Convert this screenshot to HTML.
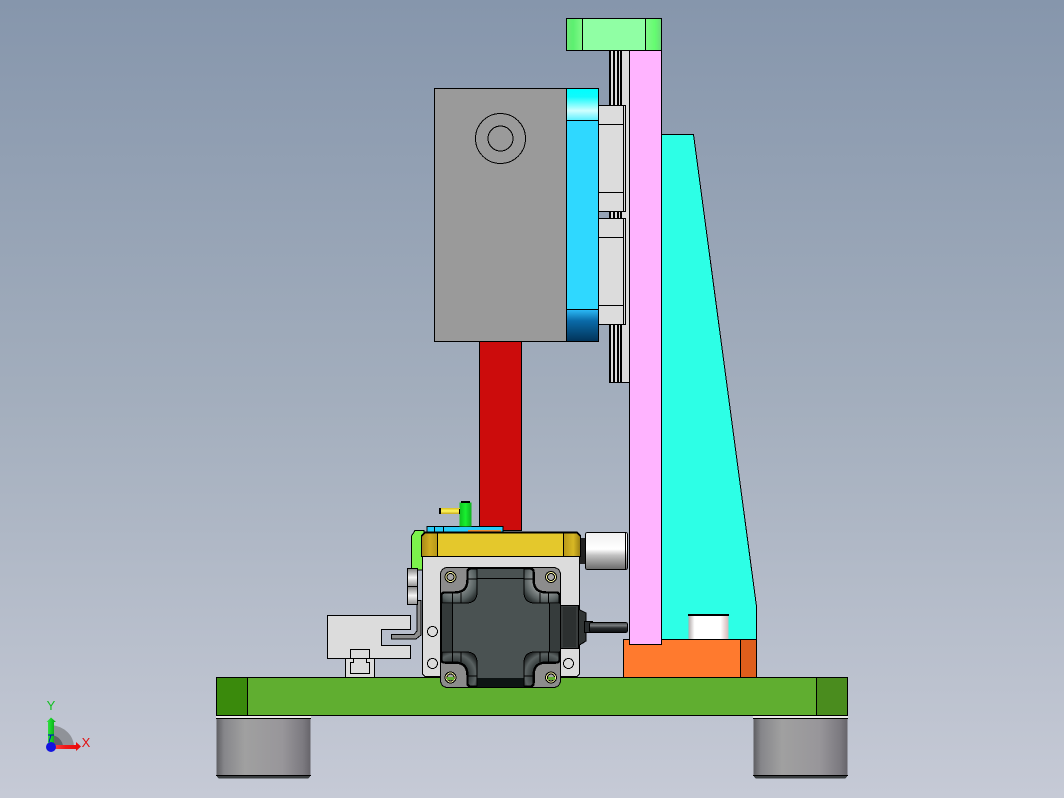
<!DOCTYPE html>
<html>
<head>
<meta charset="utf-8">
<style>
html,body{margin:0;padding:0;background:#a0aaba;}
body{width:1064px;height:798px;overflow:hidden;}
svg{display:block;}
text{font-family:"Liberation Sans",sans-serif;}
</style>
</head>
<body>
<svg width="1064" height="798" viewBox="0 0 1064 798" xmlns="http://www.w3.org/2000/svg">
<defs>
<linearGradient id="bg" x1="0" y1="0" x2="0" y2="1">
<stop offset="0" stop-color="#8696ac"/><stop offset=".5" stop-color="#a3aebd"/><stop offset="1" stop-color="#c6cad6"/>
</linearGradient>
<linearGradient id="gTopL" x1="0" y1="0" x2="1" y2="0"><stop offset="0" stop-color="#6ee878"/><stop offset=".4" stop-color="#5cf070"/><stop offset="1" stop-color="#80f888"/></linearGradient>
<linearGradient id="gTopR" x1="0" y1="0" x2="1" y2="0"><stop offset="0" stop-color="#80f888"/><stop offset=".6" stop-color="#64fc70"/><stop offset="1" stop-color="#6cdc7c"/></linearGradient>
<linearGradient id="blueTop" x1="0" y1="0" x2="0" y2="1"><stop offset="0" stop-color="#00ffff"/><stop offset=".25" stop-color="#10fafc"/><stop offset=".7" stop-color="#d0ffff"/><stop offset="1" stop-color="#60f0ff"/></linearGradient>
<linearGradient id="blueBot" x1="0" y1="0" x2="0" y2="1"><stop offset="0" stop-color="#2ab8f4"/><stop offset=".35" stop-color="#0a6aa8"/><stop offset="1" stop-color="#02345a"/></linearGradient>
<linearGradient id="foot" x1="0" y1="0" x2="1" y2="0"><stop offset="0" stop-color="#5e5e62"/><stop offset=".08" stop-color="#86868a"/><stop offset=".3" stop-color="#a0a0a0"/><stop offset=".7" stop-color="#98969a"/><stop offset=".92" stop-color="#7c7a80"/><stop offset="1" stop-color="#66646a"/></linearGradient>
<linearGradient id="cyl" x1="0" y1="0" x2="0" y2="1"><stop offset="0" stop-color="#f0f0f0"/><stop offset=".45" stop-color="#ffffff"/><stop offset=".62" stop-color="#c0c0c0"/><stop offset="1" stop-color="#6a6a6a"/></linearGradient>
<linearGradient id="cylw" x1="0" y1="0" x2="1" y2="0"><stop offset="0" stop-color="#b0a8a8"/><stop offset=".15" stop-color="#fff"/><stop offset=".8" stop-color="#fff"/><stop offset=".95" stop-color="#e0c8c8"/><stop offset="1" stop-color="#c8bcbc"/></linearGradient>
<linearGradient id="yelL" x1="0" y1="0" x2="1" y2="0"><stop offset="0" stop-color="#a88a18"/><stop offset=".5" stop-color="#d0ac20"/><stop offset="1" stop-color="#b89818"/></linearGradient>
<linearGradient id="yelR" x1="0" y1="0" x2="1" y2="0"><stop offset="0" stop-color="#b89818"/><stop offset=".6" stop-color="#d8b824"/><stop offset="1" stop-color="#9c8014"/></linearGradient>
<linearGradient id="gcyl" x1="0" y1="0" x2="0" y2="1"><stop offset="0" stop-color="#808080"/><stop offset=".5" stop-color="#f4f4f4"/><stop offset="1" stop-color="#909090"/></linearGradient>
<linearGradient id="shaft" x1="0" y1="0" x2="0" y2="1"><stop offset="0" stop-color="#3a3e40"/><stop offset=".3" stop-color="#7a7e80"/><stop offset=".55" stop-color="#2a2e30"/><stop offset="1" stop-color="#0c0e10"/></linearGradient>
<linearGradient id="tube" x1="0" y1="0" x2="1" y2="0"><stop offset="0" stop-color="#10c020"/><stop offset=".5" stop-color="#18f030"/><stop offset="1" stop-color="#10b020"/></linearGradient>
<linearGradient id="pin" x1="0" y1="0" x2="0" y2="1"><stop offset="0" stop-color="#d8c020"/><stop offset=".5" stop-color="#fff860"/><stop offset="1" stop-color="#c8a818"/></linearGradient>
<radialGradient id="bTL" gradientUnits="userSpaceOnUse" cx="455" cy="580" r="26"><stop offset=".45" stop-color="#8a9090"/><stop offset=".8" stop-color="#566060"/><stop offset="1" stop-color="#2c3232"/></radialGradient>
<radialGradient id="bTR" gradientUnits="userSpaceOnUse" cx="546" cy="580" r="26"><stop offset=".45" stop-color="#9a9f9f"/><stop offset=".8" stop-color="#5a6262"/><stop offset="1" stop-color="#2c3232"/></radialGradient>
<radialGradient id="bBL" gradientUnits="userSpaceOnUse" cx="455" cy="675" r="26"><stop offset=".45" stop-color="#2a3030"/><stop offset=".8" stop-color="#5a6262"/><stop offset="1" stop-color="#242828"/></radialGradient>
<radialGradient id="bBR" gradientUnits="userSpaceOnUse" cx="546" cy="675" r="26"><stop offset=".45" stop-color="#2a3030"/><stop offset=".8" stop-color="#5a6262"/><stop offset="1" stop-color="#242828"/></radialGradient>
<linearGradient id="redA" x1="0" y1="0" x2="1" y2="0"><stop offset="0" stop-color="#ff5050"/><stop offset=".5" stop-color="#f01818"/><stop offset="1" stop-color="#e80808"/></linearGradient>
<linearGradient id="grnA" x1="0" y1="0" x2="1" y2="0"><stop offset="0" stop-color="#40e050"/><stop offset=".5" stop-color="#14d024"/><stop offset="1" stop-color="#0c9c18"/></linearGradient>
</defs>

<rect width="1064" height="798" fill="url(#bg)"/>

<g stroke="#000" stroke-width="1" shape-rendering="crispEdges">
<!-- wedge -->
<path d="M661.5 134.5H693.5L756.5 606.5V639.5H661.5Z" fill="#2dffe6"/>
<!-- white cylinder -->
<rect x="688.5" y="615.5" width="40" height="24" fill="url(#cylw)" stroke="none"/>
<path d="M688 615H729" stroke-width="2"/>

<!-- rail -->
<rect x="609.5" y="50.5" width="20" height="332" fill="#dcdcdc"/>
<g fill="#000" stroke="none">
<rect x="609" y="51" width="2" height="331"/>
<rect x="613" y="51" width="2" height="331"/>
<rect x="617" y="51" width="2" height="331"/>
<rect x="620" y="51" width="2" height="331"/>
</g>

<!-- orange -->
<rect x="623.5" y="639.5" width="117" height="38" fill="#ff7a2e"/>
<rect x="740.5" y="639.5" width="16" height="38" fill="#de5e1c"/>
<!-- pink -->
<rect x="629.5" y="50.5" width="32" height="594" fill="#ffb4ff"/>
<!-- top green -->
<rect x="566.5" y="18.5" width="95" height="32" fill="#90ffa4"/>
<rect x="567" y="19" width="15" height="31" fill="url(#gTopL)" stroke="none"/>
<rect x="646" y="19" width="15" height="31" fill="url(#gTopR)" stroke="none"/>
<path d="M582.5 18.5V50.5M645.5 18.5V50.5" fill="none"/>

<!-- slider blocks -->
<rect x="598.5" y="105.5" width="27" height="106" fill="#dcdcdc"/>
<rect x="598.5" y="218.5" width="27" height="106" fill="#dcdcdc"/>
<path d="M598.5 124.5H624M598.5 192.5H624M623.5 105.5V211.5M598.5 237.5H624M598.5 305.5H624M623.5 218.5V324.5" fill="none"/>

<!-- grey block -->
<rect x="434.5" y="88.5" width="132" height="253" fill="#9a9a9a"/>
<circle cx="500.5" cy="138.5" r="25" fill="none"/>
<circle cx="500.5" cy="138.5" r="12.5" fill="none"/>
<!-- blue -->
<rect x="566.5" y="88.5" width="32" height="253" fill="#2fd8ff"/>
<rect x="567" y="89" width="31" height="31" fill="url(#blueTop)" stroke="none"/>
<rect x="567" y="310" width="31" height="31" fill="url(#blueBot)" stroke="none"/>
<path d="M566.5 120.5H598.5M566.5 309.5H598.5" fill="none"/>

<!-- red -->
<rect x="479.5" y="341.5" width="42" height="189" fill="#cc0c0c"/>

<!-- base -->
<rect x="216.5" y="677.5" width="631" height="38" fill="#60ae30"/>
<rect x="216.5" y="677.5" width="31" height="38" fill="#3a8a0c"/>
<rect x="816.5" y="677.5" width="31" height="38" fill="#4a8c1e"/>

<!-- feet -->
<rect x="216" y="716" width="95" height="3" fill="#ecebea" stroke="none"/>
<rect x="753" y="716" width="95" height="3" fill="#ecebea" stroke="none"/>
<rect x="216.5" y="718.5" width="94" height="57" fill="url(#foot)" stroke="none"/>
<rect x="753.5" y="718.5" width="94" height="57" fill="url(#foot)" stroke="none"/>
<path d="M216 718.5H311M753 718.5H848M216 775.5H311M753 775.5H848" fill="none"/>
<path d="M217 776H310V777L308 778.500H219L217 777Z" fill="#3a3e40" stroke="none"/>
<path d="M754 776H847V777L845 778.500H756L754 777Z" fill="#3a3e40" stroke="none"/>

<!-- left white block -->
<path d="M345.500 658.500V677.500H374.500V658.500Z" fill="#dcdcdc"/>
<path d="M327.500 615.500H410.500V629.500H381.500V645.500H410.500V658.500H327.500Z" fill="#dcdcdc"/>
<path d="M350.500 658.500V649.500H369.500V658.500M353.500 658.500V662.500H350.500V673.500H369.500V662.500H366.500V658.500" fill="none"/>
<!-- L strip -->
<path d="M417 600.500V631L414 634.500H391.500V639H416L421 635V600.500Z" fill="#8e8e8e"/>

<!-- green left part -->
<path d="M411.500 570V536L415 530.500H424V570Z" fill="#7cf24c"/>
<!-- grey cylinders -->
<rect x="407.500" y="568.500" width="10" height="18" fill="url(#gcyl)"/>
<rect x="407.500" y="586.500" width="10" height="18" fill="url(#gcyl)"/>

<!-- blue strip -->
<rect x="427" y="526.500" width="76" height="6" fill="#28ccf8"/>
<path d="M434.500 526.500V532.500M443.500 526.500V532.500" fill="none"/>
<rect x="468" y="530" width="33" height="2" fill="#e88a30" stroke="none"/>
<!-- tube and pin -->
<rect x="459.500" y="502.500" width="12" height="24" fill="url(#tube)" stroke="none"/>
<rect x="461" y="501" width="9" height="2" fill="#000" stroke="none"/>
<rect x="440" y="508" width="20" height="6" fill="url(#pin)" stroke="none"/>
<rect x="439" y="508" width="2" height="6" fill="#000" stroke="none"/>
<rect x="459" y="509" width="1" height="5" fill="#000" stroke="none"/>

<!-- right cylinder -->
<rect x="579" y="538" width="7" height="26" fill="#222" stroke="none"/>
<rect x="585.500" y="532.500" width="42" height="37" rx="2" fill="url(#cyl)"/>
<path d="M625.500 533V569" fill="none"/>

<!-- plate -->
<path d="M422.500 556.500H579.500V674L577 676.500H425L422.500 674Z" fill="#dcdcdc"/>
<!-- yellow -->
<path d="M421.500 556.500V536L425 532.500H577L580.500 536V556.500Z" fill="#e4c82c"/>
<path d="M422 556V536L425 533H437.500V556Z" fill="url(#yelL)" stroke="none"/>
<path d="M563.500 533H577L580 536V556H563.500Z" fill="url(#yelR)" stroke="none"/>
<path d="M437.500 532.500V556.500M563.500 532.500V556.500M421.500 556.500H580.500" fill="none"/>
<path d="M421.500 536L425 532.500H577L580.500 536" fill="none" stroke-width="2"/>

<!-- plate holes -->
<g fill="#dcdcdc">
<circle cx="432.500" cy="631.500" r="5"/>
<circle cx="432.500" cy="663.500" r="5"/>
<circle cx="568.500" cy="663.500" r="5"/>
</g>

<!-- connector -->
<path d="M578 609L586 613V641L578 646Z" fill="#303434"/>
<rect x="584.500" y="621.500" width="8" height="11" fill="#2a2e30"/>
<rect x="560.500" y="605.500" width="18" height="43" fill="#383c3c"/>
<rect x="563" y="607" width="13" height="40" fill="#2c3030" stroke="none"/>
<rect x="589.500" y="622.500" width="38" height="10" rx="2" fill="url(#shaft)"/>
</g>

<!-- motor -->
<g shape-rendering="crispEdges">
<rect x="440.500" y="567.500" width="120" height="120" rx="7" fill="#8c8c8c" stroke="#000"/>
<!-- body -->
<path d="M472 568H529Q534 568 534 572V580Q534 592 546 592H556Q560 592 560 596V659Q560 663 556 663H546Q534 663 534 675V683Q534 687 529 687H472Q467 687 467 683V675Q467 663 455 663H445Q441 663 441 659V596Q441 592 445 592H455Q467 592 467 580V572Q467 568 472 568Z" fill="#4a5252" stroke="#000" stroke-width="1.500"/>
<path d="M477 678H524V687H477Z" fill="#0e1414"/>
<path d="M442 604H452V651H442Z" fill="#343a3a"/>
<path d="M549 604H560V651H549Z" fill="#363c3c"/>
<path d="M477 578.500H524" stroke="#000" stroke-width="1" fill="none"/>
<path d="M452.500 603V652M549.500 603V652" stroke="#000" stroke-width="1" fill="none"/>
<!-- corner bands -->
<g stroke="#000" stroke-width="1">
<path d="M472 569H477V592Q477 603 466 603H442V596Q442 593 445 593H455Q468 593 468 580V572Q468 569 472 569Z" fill="url(#bTL)"/>
<path d="M529 569H524V592Q524 603 535 603H559V596Q559 593 556 593H546Q533 593 533 580V572Q533 569 529 569Z" fill="url(#bTR)"/>
<path d="M472 686H477V663Q477 652 466 652H442V659Q442 662 445 662H455Q468 662 468 675V683Q468 686 472 686Z" fill="url(#bBL)"/>
<path d="M529 686H524V663Q524 652 535 652H559V659Q559 662 556 662H546Q533 662 533 675V683Q533 686 529 686Z" fill="url(#bBR)"/>
<path d="M468 579H477M524 579H533M468 676H477M524 676H533M452.500 593V603M461 593V603M452.500 652V662M461 652V662M548.500 593V603M540 593V603M548.500 652V662M540 652V662" fill="none"/>
</g>
<!-- flange holes -->
<g fill="#f4f0a0" stroke="#000" stroke-width="1">
<circle cx="450.500" cy="577" r="5.500"/>
<circle cx="551" cy="577" r="5.500"/>
<circle cx="450.500" cy="677.500" r="5.500"/>
<circle cx="551" cy="677.500" r="5.500"/>
</g>
<g fill="#a8a8a8" stroke="#000" stroke-width="1">
<circle cx="450.500" cy="577" r="3.500"/>
<circle cx="551" cy="577" r="3.500"/>
<circle cx="450.500" cy="677.500" r="3.500"/>
<circle cx="551" cy="677.500" r="3.500"/>
</g>
<path d="M447 677H454V680H447ZM548 677H555V680H548Z" fill="#60ae30"/>
</g>

<!-- triad -->
<path d="M51 747L51 725A25 22 0 0 1 74 747Z" fill="#8f9298"/>
<path d="M51 747L51 735A13 12 0 0 1 63 747Z" fill="#60646a"/>
<path d="M48 746V722H46.500L51 717.500L56 722H54V746Z" fill="url(#grnA)"/>
<path d="M50 745H76V742L81 746.500L76 751V749H50Z" fill="url(#redA)"/>
<path d="M48 735H54M51 735L49 742" stroke="#0000d0" fill="none" stroke-width="1"/>
<circle cx="51" cy="747" r="5" fill="#1414e0"/>
<text x="51" y="710" font-size="13" fill="#10c020" text-anchor="middle">Y</text>
<text x="86" y="747" font-size="13" fill="#e01010" text-anchor="middle">X</text>
</svg>
</body>
</html>
